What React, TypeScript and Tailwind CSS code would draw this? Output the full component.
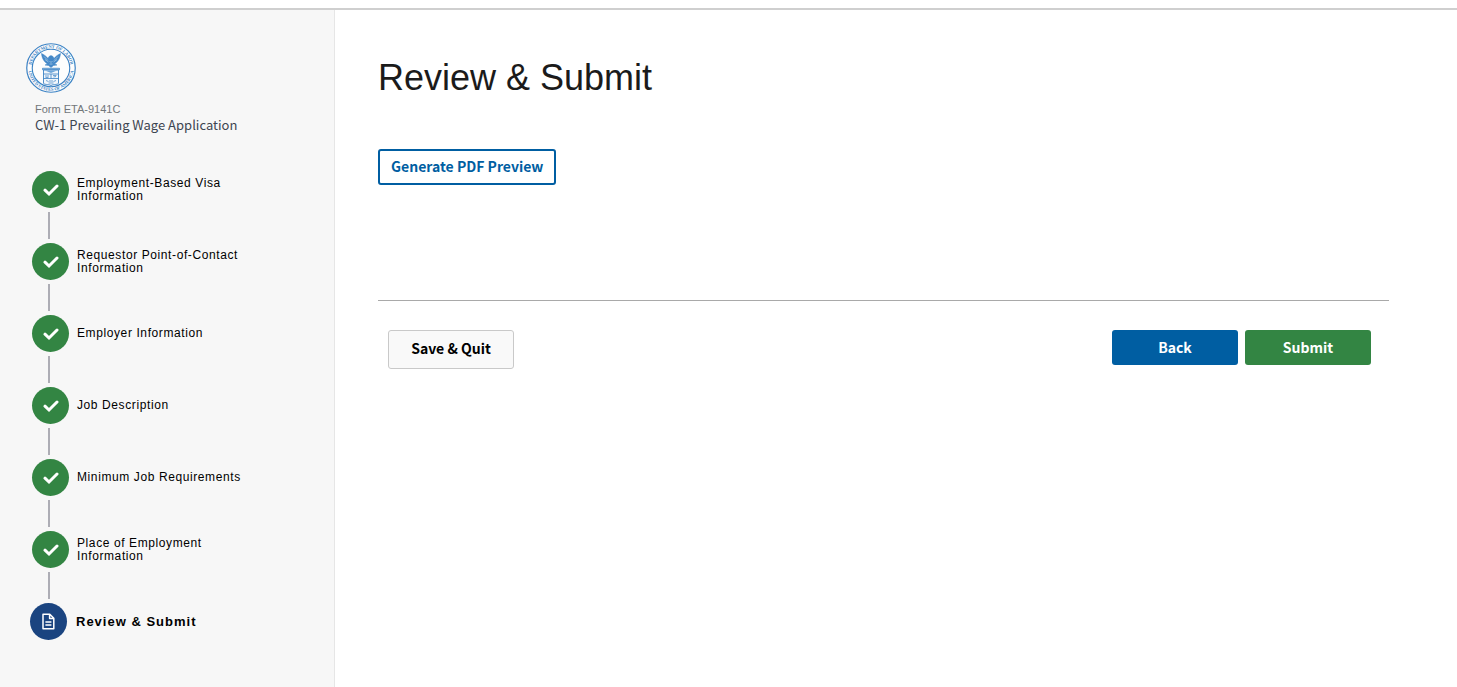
interface Step {
  title: string;
  current?: boolean;
}

const steps: Step[] = [
  { title: "Employment-Based Visa Information" },
  { title: "Requestor Point-of-Contact Information" },
  { title: "Employer Information" },
  { title: "Job Description" },
  { title: "Minimum Job Requirements" },
  { title: "Place of Employment Information" },
  { title: "Review & Submit", current: true },
];

function Seal() {
  return (
    <svg viewBox="0 0 100 100" className="size-[50px]" role="img" aria-label="Department of Labor" fill="none" stroke="#3b82c4">
      <defs>
        <path id="seal-top" d="M10.5 50a39.5 39.5 0 0 1 79 0" />
        <path id="seal-bottom" d="M4.5 50a45.5 45.5 0 0 0 91 0" />
      </defs>
      <circle cx="50" cy="50" r="48.5" fill="#fdfdfd" strokeWidth="2.4" />
      <circle cx="50" cy="50" r="37.5" strokeWidth="2.2" />
      <g fill="#3b82c4" stroke="none" fontSize="9" className="font-['Liberation_Serif',serif] font-bold">
        <text textAnchor="middle">
          <textPath href="#seal-top" startOffset="50%">DEPARTMENT OF LABOR</textPath>
        </text>
        <text textAnchor="middle">
          <textPath href="#seal-bottom" startOffset="50%">UNITED STATES OF AMERICA</textPath>
        </text>
      </g>
      {/* eagle */}
      <path
        d="M31 21c1 11 6 17 12 21l-5 2 7 1 5 4 5-4 7-1-5-2c6-4 11-10 12-21-5 2-10 6-13 10l-2-4-4-2-4 2-2 4c-3-4-8-8-13-10z"
        fill="#4488c8"
        strokeWidth="1"
      />
      <path d="M36 27l8 8M38 33l7 5M64 27l-8 8M62 33l-7 5M47 36l3 3 3-3M47 42h6" stroke="#d9e8f5" strokeWidth="1" />
      {/* shield */}
      <path d="M33 50.5h34v3h-34z" fill="#9dc2e4" strokeWidth="1.5" />
      <path d="M35 54v26c0 4 10 2 15 5 5-3 15-1 15-5v-26z" fill="#f1f6fb" strokeWidth="1.8" />
      <path d="M38 55l12 5 12-5z" fill="#6ea6d9" stroke="none" />
      <path d="M35 62h30M35 71h30M50 62v9" strokeWidth="1.6" />
      <path d="M38 66h8M39 69h6M54 65h7M55 68l5-1M40 75l5 2M46 76h8M55 77l5-2M45 80h10" strokeWidth="1.4" />
    </svg>
  );
}

function CheckIcon() {
  return (
    <svg viewBox="0 0 16 16" className="size-4" fill="none" stroke="white" strokeWidth="3" strokeLinecap="round" aria-hidden="true">
      <path d="M2 8.2l4 3.8L14 4" />
    </svg>
  );
}

function DocumentIcon() {
  return (
    <svg viewBox="0 0 14 18" className="h-[18px] w-3.5" fill="none" stroke="white" strokeWidth="1.5" strokeLinejoin="round" aria-hidden="true">
      <path d="M1 1.2h6.8l4 4v10.6H1zM7.6 1.4v4h4M3.4 9h6M3.4 12h6" />
    </svg>
  );
}

function StepItem({ step, last }: { step: Step; last: boolean }) {
  return (
    <li className={step.current ? "pl-[30px]" : "pl-8"}>
      <a
        href="#"
        aria-current={step.current ? "step" : undefined}
        className={step.current ? "flex items-center gap-[9px]" : "flex items-center gap-2"}
      >
        <span
          className={
            step.current
              ? "flex size-[37px] shrink-0 items-center justify-center rounded-full bg-[#1a4480]"
              : "flex size-[37px] shrink-0 items-center justify-center rounded-full bg-[#338543]"
          }
        >
          {step.current ? <DocumentIcon /> : <CheckIcon />}
        </span>
        <span
          className={
            step.current
              ? "text-[13px] leading-[13px] font-bold tracking-[1px] text-black"
              : "max-w-[172px] text-xs leading-[13px] tracking-wider text-black"
          }
        >
          {step.title}
        </span>
      </a>
      {!last && <div className="my-1 ml-4 h-[27px] w-0.5 bg-[#adadb5]" />}
    </li>
  );
}

function Sidebar() {
  return (
    <aside className="w-[335px] shrink-0 border-r border-[#e6e6e6] bg-[#f7f7f7] pt-[33px]">
      <div className="pl-[26px]">
        <Seal />
      </div>
      <div className="pt-[9px] pl-[35px]">
        <p className="text-[11px] leading-[14px] text-[#71767a]">Form ETA-9141C</p>
        <p className="font-['Noto_Sans_CJK_JP',sans-serif] text-[13px] leading-[18px] text-[#3d4551]">
          CW-1 Prevailing Wage Application
        </p>
      </div>
      <nav aria-label="Application steps" className="pt-[37px] pb-8">
        <ol>
          {steps.map((step, i) => (
            <StepItem key={step.title} step={step} last={i === steps.length - 1} />
          ))}
        </ol>
      </nav>
    </aside>
  );
}

export default function App() {
  return (
    <div className="flex min-h-screen flex-col bg-white font-['Liberation_Sans',Arial,sans-serif]">
      <header className="h-2.5 border-b-2 border-[#cfcfcf]" />
      <div className="flex flex-1">
        <Sidebar />
        <main className="min-w-0 flex-1 pt-[46px] pr-[68px] pl-[43px]">
          <h1 className="text-4xl leading-[44px] text-[#1b1b1b]">Review &amp; Submit</h1>
          <div className="border-b border-[#a9a9a9] pt-[49px] pb-[115px] font-['Noto_Sans_CJK_JP',sans-serif]">
            <button
              type="button"
              className="block h-9 rounded-[3px] border-2 border-[#005ea2] bg-white px-[11px] pb-0.5 text-sm leading-5 font-bold text-[#005ea2]"
            >
              Generate PDF Preview
            </button>
          </div>
          <div className="flex items-start justify-between pt-[29px] pr-[18px] pl-2.5 font-['Noto_Sans_CJK_JP',sans-serif] text-sm leading-5 font-bold">
            <button type="button" className="h-[39px] w-[126px] rounded-[3px] border border-[#c9c9c9] bg-[#f9f9f9] pb-1 text-black">
              Save &amp; Quit
            </button>
            <div className="flex gap-[7px] text-white">
              <button type="button" className="h-[35px] w-[126px] rounded-[3px] bg-[#005ea2] pb-0.5">
                Back
              </button>
              <button type="button" className="h-[35px] w-[126px] rounded-[3px] bg-[#338543] pb-0.5">
                Submit
              </button>
            </div>
          </div>
        </main>
      </div>
    </div>
  );
}
